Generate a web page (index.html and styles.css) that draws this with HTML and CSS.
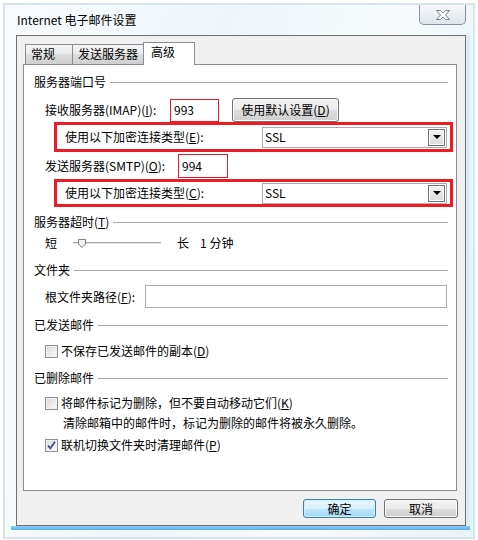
FILE: index.html
```html
<!DOCTYPE html>
<html lang="zh-CN">
<head>
    <meta charset="UTF-8">
    <title>Internet 电子邮件设置</title>
    <link rel="stylesheet" href="styles.css">
</head>
<body>

    <div class="frame">
        <!-- Title bar -->
        <div class="titlebar">
            <span class="title">Internet 电子邮件设置</span>
            <div class="close-btn">
                <svg width="16" height="10" viewBox="0 0 16 10">
                    <path d="M1.5 0.5 L5.5 0.5 L8 3 L10.5 0.5 L14.5 0.5 L10.5 5 L14.5 9.5 L10.5 9.5 L8 7 L5.5 9.5 L1.5 9.5 L5.5 5 Z" fill="#fdfdfd" stroke="#7d858e" stroke-width="1"/>
                </svg>
            </div>
        </div>

        <div class="glass">
            <div class="dialog">
                <div class="tabs">
                    <div class="tab tab-general">常规</div>
                    <div class="tab tab-send">发送服务器</div>
                    <div class="tab tab-adv active">高级</div>
                </div>

                <div class="pane">
                    <div class="group"><span>服务器端口号</span></div>

                    <div class="row row-imap">
                        <span class="lbl-imap">接收服务器(IMAP)(<u>I</u>):</span>
                        <div class="port port-in">993</div>
                        <div class="btn btn-default">使用默认设置(<u>D</u>)</div>
                    </div>

                    <div class="enc enc-in">
                        <span>使用以下加密连接类型(<u>E</u>):</span>
                        <div class="combo"><span>SSL</span><span class="combo-arrow"></span></div>
                    </div>

                    <div class="row row-smtp">
                        <span class="lbl-smtp">发送服务器(SMTP)(<u>O</u>):</span>
                        <div class="port port-out">994</div>
                    </div>

                    <div class="enc enc-out">
                        <span>使用以下加密连接类型(<u>C</u>):</span>
                        <div class="combo"><span>SSL</span><span class="combo-arrow"></span></div>
                    </div>

                    <div class="group g-timeout"><span>服务器超时(<u>T</u>)</span></div>
                    <div class="row slider-row">
                        <span>短</span>
                        <div class="track">
                            <svg class="thumb" width="8" height="9" viewBox="0 0 8 9">
                                <path d="M0.5 0.5 H7.5 V5 L4 8.5 L0.5 5 Z" fill="#f2f2f2" stroke="#7b7b7b"/>
                            </svg>
                        </div>
                        <span class="long">长</span>
                        <span class="minutes">1 分钟</span>
                    </div>

                    <div class="group g-folder"><span>文件夹</span></div>
                    <div class="row path-row">
                        <span class="lbl-path">根文件夹路径(<u>F</u>):</span>
                        <div class="path-input"></div>
                    </div>

                    <div class="group g-sent"><span>已发送邮件</span></div>
                    <div class="row cb-row cb-dont-save">
                        <span class="cb"></span>
                        <span>不保存已发送邮件的副本(<u>D</u>)</span>
                    </div>

                    <div class="group g-deleted"><span>已删除邮件</span></div>
                    <div class="row cb-row cb-mark">
                        <span class="cb"></span>
                        <span>将邮件标记为删除，但不要自动移动它们(<u>K</u>)</span>
                    </div>
                    <div class="note">清除邮箱中的邮件时，标记为删除的邮件将被永久删除。</div>
                    <div class="row cb-row cb-purge">
                        <span class="cb checked">
                            <svg width="11" height="11" viewBox="0 0 11 11">
                                <path d="M2 5.5 L4.3 8.3 L9 1.8" fill="none" stroke="#3e4c8a" stroke-width="1.8"/>
                            </svg>
                        </span>
                        <span>联机切换文件夹时清理邮件(<u>P</u>)</span>
                    </div>
                </div>

                <div class="actions">
                    <div class="btn btn-ok">确定</div>
                    <div class="btn btn-cancel">取消</div>
                </div>
            </div>
        </div>
    </div>

</body>
</html>
```

FILE: styles.css
```css
* {
    box-sizing: border-box;
}

body {
    margin: 0;
    background: #fff;
    font-family: "Noto Sans CJK SC", "Noto Sans", sans-serif;
    font-size: 12px;
    line-height: 16px;
    color: #000;
}

u {
    text-decoration: underline;
}

.frame {
    width: 472px;
    height: 536px;
    margin: 3px 0 0 3px;
    border: 2px solid #d6e4ed;
    background: linear-gradient(100deg, #f8fbfd 0%, #eef6fa 40%, #f6fafc 70%, #e8f2f7 100%);
}

/* Title bar */
.titlebar {
    display: flex;
    height: 30px;
    padding: 0 7px 0 12px;
}

.title {
    align-self: center;
}

.close-btn {
    margin-left: auto;
    width: 47px;
    height: 20px;
    border: 1px solid #8a939e;
    border-top: none;
    border-radius: 0 0 5px 5px;
    background: linear-gradient(#f6f8fa, #dfe5eb);
    display: flex;
    justify-content: center;
}

.close-btn svg {
    margin-top: 5px;
}

.glass {
    width: 459px;
    margin-left: 6px;
    padding: 0 3px 4px 5px;
    background:
        linear-gradient(to top, #5aaee8 0, #8fcdf3 4px, transparent 4px),
        linear-gradient(to right, #f3fbfc, #d6f0f5);
}

.dialog {
    width: 450px;
    height: 491px;
    border: 1px solid #6f6f6f;
    background: #f0f0f0;
    padding-top: 6px;
}

/* Tabs */
.tabs {
    display: flex;
    align-items: flex-end;
    height: 22px;
    margin-left: 8px;
}

.tab {
    height: 20px;
    border: 1px solid #898c95;
    border-bottom: none;
    background: linear-gradient(#f3f3f3, #ebebeb 50%, #dddddd 50%, #cfcfcf);
    padding: 1px 0 0 5px;
}

.tab-general {
    width: 48px;
}

.tab-send {
    width: 72px;
    margin-left: -1px;
}

.tab-adv {
    width: 52px;
    margin-left: -1px;
}

.tab.active {
    height: 23px;
    margin-bottom: -1px;
    background: #fff;
    padding: 1px 0 0 7px;
    position: relative;
    z-index: 1;
}

.pane {
    margin: 0 8px 0 6px;
    height: 427px;
    border: 1px solid #898c95;
    background: #fff;
    padding: 9px 8px 0 10px;
}

/* Group headers */
.group {
    display: flex;
    align-items: center;
    height: 16px;
}

.group::after {
    content: "";
    flex: 1;
    height: 1px;
    background: #a6a6a6;
    margin-left: 4px;
}

.g-timeout {
    margin-top: 7px;
}

.g-folder {
    margin-top: 11px;
}

.g-sent {
    margin-top: 9px;
}

.g-deleted {
    margin-top: 11px;
}

.row {
    display: flex;
    align-items: center;
    margin-left: 11px;
}

.row-imap {
    margin-top: 8px;
    height: 24px;
}

.row-smtp {
    margin-top: 2px;
    height: 24px;
}

.lbl-imap {
    width: 125px;
}

.lbl-smtp {
    width: 133px;
}

.port {
    border: 1px solid #ed1c24;
    background: #fff;
    padding-left: 3px;
    display: flex;
    align-items: center;
}

.port-in {
    width: 49px;
    height: 23px;
}

.port-out {
    width: 50px;
    height: 24px;
}

.btn {
    border: 1px solid #707070;
    border-radius: 3px;
    background: linear-gradient(#f2f2f2, #ebebeb 50%, #dddddd 50%, #cfcfcf);
    box-shadow: inset 0 0 0 1px #fbfbfb;
    display: flex;
    align-items: center;
    justify-content: center;
}

.btn-default {
    width: 107px;
    height: 24px;
    margin-left: 13px;
}

/* Red highlighted encryption rows */
.enc {
    margin-left: 20px;
    width: 399px;
    border: 3px solid #ed1c24;
    display: flex;
    align-items: center;
    padding-left: 8px;
}

.enc-in {
    height: 30px;
}

.enc-out {
    height: 28px;
    margin-top: 1px;
}

.combo {
    margin-left: auto;
    margin-right: 3px;
    width: 185px;
    height: 21px;
    border: 1px solid #abadb3;
    background: #fff;
    display: flex;
    align-items: center;
    padding: 0 1px 0 2px;
}

.combo-arrow {
    margin-left: auto;
    width: 17px;
    height: 17px;
    border: 1px solid #707070;
    box-shadow: inset 0 0 0 1px #fff;
    background: linear-gradient(#f2f2f2, #dcdcdc);
    display: flex;
    align-items: center;
    justify-content: center;
}

.combo-arrow::before {
    content: "";
    border-left: 4px solid transparent;
    border-right: 4px solid transparent;
    border-top: 4px solid #000;
}

/* Timeout slider */
.slider-row {
    margin-top: 5px;
    height: 16px;
}

.track {
    position: relative;
    width: 88px;
    height: 3px;
    margin-left: 16px;
    border-top: 1px solid #a9a9a9;
    border-bottom: 1px solid #fff;
    background: #e4e4e4;
}

.thumb {
    position: absolute;
    left: 5px;
    top: -4px;
}

.long {
    margin-left: 16px;
}

.minutes {
    margin-left: 11px;
}

.path-row {
    margin-top: 7px;
    height: 23px;
}

.lbl-path {
    width: 100px;
}

.path-input {
    width: 302px;
    height: 23px;
    border: 1px solid #abadb3;
    background: #fff;
}

/* Checkboxes */
.cb-row {
    height: 16px;
}

.cb {
    width: 13px;
    height: 13px;
    border: 1px solid #8e8f8f;
    background: linear-gradient(135deg, #d8d8d8, #fbfbfb);
    box-shadow: inset 0 0 0 1px #f2f2f2;
    margin-right: 3px;
    display: flex;
    align-items: center;
    justify-content: center;
}

.cb-dont-save {
    margin-top: 10px;
}

.cb-mark {
    margin-top: 9px;
}

.note {
    margin: 4px 0 0 29px;
    height: 16px;
}

.cb-purge {
    margin-top: 6px;
}

/* Dialog buttons */
.actions {
    display: flex;
    justify-content: flex-end;
    gap: 8px;
    margin-top: 8px;
    padding-right: 7px;
}

.btn-ok {
    width: 73px;
    height: 19px;
    border-color: #3c7fb1;
    background: linear-gradient(#eaf6fd, #d9f0fc 50%, #bee6fd 50%, #a7d9f5);
    box-shadow: inset 0 0 0 1px #d0f0fd;
}

.btn-cancel {
    width: 74px;
    height: 19px;
}
```
